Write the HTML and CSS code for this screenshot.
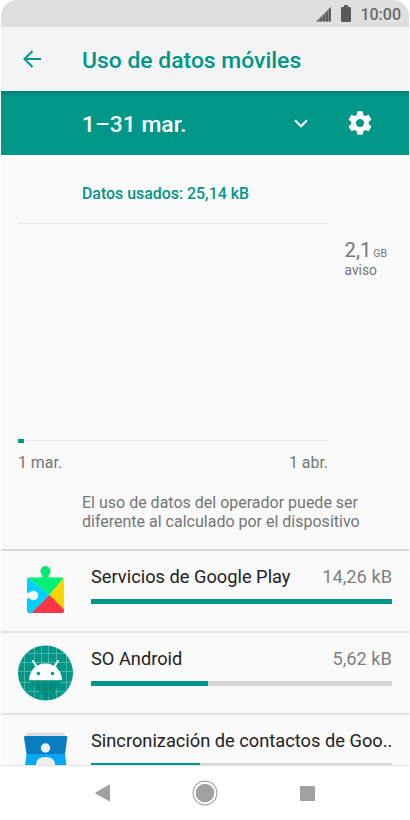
FILE: index.html
```html
<!DOCTYPE html>
<html lang="es">
<head>
<meta charset="utf-8">
<title>Uso de datos móviles</title>
<link rel="stylesheet" href="styles.css">
</head>
<body>
<div class="phone">
  <div class="status">
    <svg class="signal" width="15" height="16" viewBox="0 0 15 16"><path d="M0 15.500 15 .5v15z" fill="#858585"/><path d="M1 14.500h2v1H1zM4 12h2v3.500H4zM7 9h2v6.500H7zM10 6h2v9.500h-2zM13 2.500h2v13h-2z" fill="#5c5c5c"/></svg>
    <svg class="battery" width="10" height="17" viewBox="0 0 10 17"><path d="M3 0h4v2h2q1 0 1 1v13q0 1-1 1H1q-1 0-1-1V3q0-1 1-1h2z" fill="#595959"/></svg>
    <span class="clock">10:00</span>
  </div>
  <header class="appbar">
    <svg class="back" width="18" height="18" viewBox="0 0 18 18" fill="none" stroke="#009688" stroke-width="2"><path d="M18 9H1.500M9.500 1 1.500 9l8 8"/></svg>
    <h1>Uso de datos móviles</h1>
  </header>
  <div class="cycle">
    <span class="period">1–31 mar.</span>
    <svg class="chevron" width="14" height="9" viewBox="0 0 14 9" fill="none" stroke="#fff" stroke-width="2"><path d="m1 1.300 6 6 6-6"/></svg>
    <svg class="gear" width="28" height="28" viewBox="0 0 24 24" fill="#fff"><path d="M19.430 12.980c.04-.32.07-.64.07-.98s-.03-.66-.07-.98l2.110-1.650c.19-.15.24-.42.12-.64l-2-3.460c-.12-.22-.39-.3-.61-.22l-2.490 1c-.52-.4-1.080-.73-1.690-.98l-.38-2.650C14.460 2.180 14.250 2 14 2h-4c-.25 0-.46.18-.49.42l-.38 2.650c-.61.25-1.170.59-1.690.98l-2.490-1c-.23-.09-.49 0-.61.22l-2 3.460c-.13.22-.07.49.12.64l2.110 1.650c-.04.32-.07.65-.07.98s.03.66.07.98l-2.110 1.650c-.19.15-.24.42-.12.64l2 3.460c.12.22.39.3.61.22l2.490-1c.52.4 1.080.73 1.690.98l.38 2.650c.03.24.24.42.49.42h4c.25 0 .46-.18.49-.42l.38-2.650c.61-.25 1.170-.59 1.690-.98l2.490 1c.23.09.49 0 .61-.22l2-3.460c.12-.22.07-.49-.12-.64zM12 15.500c-1.930 0-3.500-1.570-3.500-3.500s1.570-3.500 3.500-3.500 3.500 1.570 3.500 3.500-1.570 3.500-3.500 3.500z"/></svg>
  </div>
  <main>
    <section class="usage">
      <p class="used">Datos usados: 25,14 kB</p>
      <div class="chart-row">
        <div class="chart"><div class="point"></div></div>
        <div class="warning"><div><span class="amount">2,1</span><span class="unit">GB</span></div><div class="label">aviso</div></div>
      </div>
      <div class="dates"><span>1 mar.</span><span>1 abr.</span></div>
      <p class="note">El uso de datos del operador puede ser<br>diferente al calculado por el dispositivo</p>
    </section>
    <ul class="apps">
      <li>
        <svg class="icon" width="56" height="56" viewBox="0 0 56 56">
          <defs><clipPath id="body"><rect x="9" y="14.500" width="37" height="35.500" rx="1.800"/></clipPath></defs>
          <g clip-path="url(#body)"><path d="M9 14h37v1L31.500 32z" fill="#00f076"/><path d="M9 14v36h5l17.500-18z" fill="#00d0ff"/><path d="M46 14.500V47L31.500 32z" fill="#ffd500"/><path d="M13 50.500 31.500 32 46 46.500V50.500z" fill="#f93546"/></g>
          <path d="M23.200 15c1.600-.6 1.600-2.200.8-3.200a5.100 5.100 0 1 1 7 0c-.8 1-.8 2.600.8 3.200z" fill="#00e875"/>
          <path d="M9 29.500c2 .7 2.500 0 3.200-.5a4.800 4.800 0 1 1 0 7c-.7-.5-1.200-1-3.200-.5z" fill="#fafafa"/>
        </svg>
        <div class="info"><div class="line"><span>Servicios de Google Play</span><span class="size">14,26 kB</span></div><div class="bar"><div style="width:100%"></div></div></div>
      </li>
      <li>
        <svg class="icon" width="56" height="56" viewBox="0 0 56 56">
          <defs><clipPath id="disc"><circle cx="27.500" cy="28" r="27.500"/></clipPath></defs>
          <g clip-path="url(#disc)"><path d="M0 0h56v56H0z" fill="#009688"/><path d="M6.500 0v56M16.500 0v56M23.500 0v56M30.500 0v56M38.500 0v56M48.500 0v56M0 8.500h56M0 17.500h56M0 26.500h56M0 37.500h56M0 46.500h56" stroke="#65bfb5" stroke-width=".7"/><path d="M11 35h33l-11 17H26z" fill="#00897b" opacity=".75"/></g>
          <path d="m15 16 4 6M40 16l-4 6" stroke="#fff" stroke-width="2" stroke-linecap="round"/><path d="M11 35.200a16.500 16.800 0 0 1 33 0z" fill="#fff"/><circle cx="20.500" cy="28.500" r="1.700" fill="#009688"/><circle cx="34.500" cy="28.500" r="1.700" fill="#009688"/>
        </svg>
        <div class="info"><div class="line"><span>SO Android</span><span class="size">5,62 kB</span></div><div class="bar"><div style="width:39%"></div></div></div>
      </li>
      <li>
        <svg class="icon" width="56" height="56" viewBox="0 0 56 56">
          <path d="M9.500 5.500h36l3.500 4H6z" fill="#e0e0e0"/><path d="M7 9h41.500q1 0 .8 1.500L47 27H8.500L6 10.500Q6 9 7 9z" fill="#0a7cc0"/><path d="M8.500 27H47l2 16H6.500z" fill="#08a9f4"/><circle cx="27.500" cy="21" r="4.700" fill="#eee"/><path d="M18 42v-4q0-8 9.500-8t9.500 8v4z" fill="#eee"/>
        </svg>
        <div class="info"><div class="line"><span>Sincronización de contactos de Goo..</span></div><div class="bar"><div style="width:36.200%"></div></div></div>
      </li>
    </ul>
  </main>
  <nav>
    <svg width="15" height="18" viewBox="0 0 15 18"><path d="M.8 8.200 14 .7q1-.5 1 .5v15.600q0 1-1 .5L.8 9.800q-1-.8 0-1.600z" fill="#a1a1a1"/></svg>
    <svg width="26" height="26" viewBox="0 0 26 26"><circle cx="13" cy="13" r="11.900" fill="none" stroke="#a1a1a1" stroke-width="1.100"/><circle cx="13" cy="13" r="9.300" fill="#a1a1a1"/></svg>
    <svg width="15" height="15" viewBox="0 0 15 15"><rect width="15" height="15" rx=".8" fill="#a1a1a1"/></svg>
  </nav>
</div>
</body>
</html>
```
FILE: styles.css
```css
* { box-sizing: border-box; }
body { margin: 0; background: #fff; font-family: Roboto, "Liberation Sans", sans-serif; color: #757575; }
h1, p, ul { margin: 0; padding: 0; font-weight: 400; }
svg { display: block; flex: none; }
.phone { width: 408px; height: 820px; margin-left: 1px; display: flex; flex-direction: column; overflow: hidden; border-radius: 16px; background: #fafafa; white-space: nowrap; }
.status { height: 27px; flex: none; background: #dfdfdf; display: flex; align-items: center; justify-content: flex-end; padding: 0 8px 0 0; }
.signal { margin-right: 10px; }
.battery { margin-right: 9px; }
.clock { font-size: 16px; line-height: 20px; font-weight: 500; color: #6a6a6a; padding-top: 2px; }
.appbar { height: 64px; flex: none; background: #f4f4f4; display: flex; align-items: center; padding-left: 22px; }
.back { margin-right: 41px; }
h1 { font-size: 22.9px; font-weight: 500; color: #009688; padding-top: 3px; }
.cycle { height: 64px; flex: none; background: linear-gradient(#007f73, #009688 5px); color: #fff; display: flex; align-items: center; padding: 0 35px 0 81px; }
.period { flex: 1; font-size: 22.9px; font-weight: 500; padding-top: 3px; }
.chevron { margin-right: 38px; }
main { flex: 1; min-height: 0; overflow: hidden; border-bottom: 1px solid #e2e2e2; }
.usage { height: 396px; border-bottom: 2px solid #d8d8d8; padding-left: 17px; }
.used { padding: 29px 0 0 64px; font-size: 15.9px; line-height: 20px; font-weight: 500; color: #009688; }
.chart-row { display: flex; margin-top: 19px; }
.chart { width: 310px; height: 218px; border-top: 1px solid #e8e8e8; border-bottom: 1px solid #e8e8e8; display: flex; align-items: flex-end; }
.point { width: 6px; height: 4px; background: #009688; margin-bottom: -3px; }
.warning { padding: 15px 0 0 16.500px; }
.amount { font-size: 20.300px; line-height: 24px; }
.unit { font-size: 10.500px; margin-left: 2px; }
.label { font-size: 13.800px; line-height: 16px; }
.dates { width: 310px; display: flex; justify-content: space-between; font-size: 15.900px; line-height: 20px; margin-top: 12px; }
.note { padding: 20px 0 0 64px; font-size: 16px; line-height: 19px; }
.apps { list-style: none; }
.apps li { height: 82px; border-bottom: 2px solid #e2e2e2; display: flex; padding: 12px 17px 0; }
.icon { margin-right: 17px; }
.info { flex: 1; min-width: 0; }
.line { display: flex; justify-content: space-between; font-size: 18.250px; line-height: 22px; color: #222; margin-top: 3px; }
.size { color: #808080; }
.bar { height: 5px; background: #d6d6d6; margin-top: 11px; }
.bar div { height: 100%; background: #009688; }
nav { height: 54px; flex: none; background: #fff; display: flex; align-items: center; justify-content: space-between; padding: 0 94px; }
```
